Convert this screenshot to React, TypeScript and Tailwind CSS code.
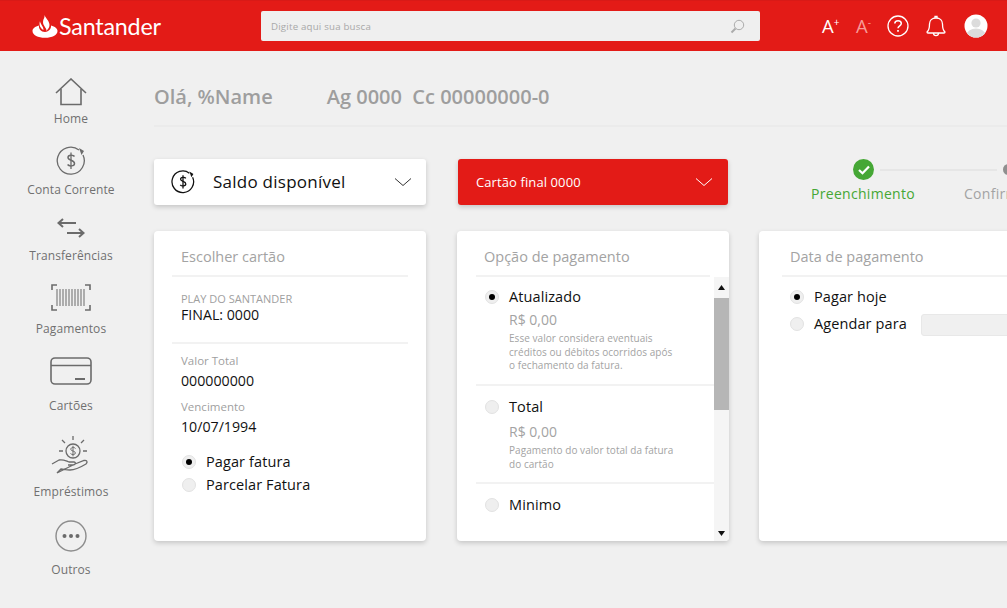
import React from "react";

const Radio = ({ on = false }: { on?: boolean }) => (
  <span className="flex h-[14px] w-[14px] shrink-0 items-center justify-center rounded-full border border-[#e2e2e2] bg-[#efefef]">
    {on && <span className="h-[6px] w-[6px] rounded-full bg-black" />}
  </span>
);

const Chevron = ({ color }: { color: string }) => (
  <svg width="18" height="10" viewBox="0 0 18 10" fill="none" stroke={color} strokeWidth="1">
    <path d="M1 1.5 L9 8.5 L17 1.5" />
  </svg>
);

const g = "#6b6b6b";

const icons = {
  home: (
    <svg width="32" height="28" viewBox="0 0 32 28" fill="none" stroke={g} strokeWidth="1.6">
      <path d="M1 15 L16 1 L31 15" />
      <path d="M6 11 V26.5 H26 V11" />
    </svg>
  ),
  conta: (
    <svg width="30" height="30" viewBox="0 0 30 30" fill="none" stroke={g} strokeWidth="1.3">
      <path d="M23 4 A13.5 13.5 0 1 0 27 9" />
      <path d="M23 2 L28 5 L25.5 9 Z" fill={g} stroke="none" />
      <path d="M18.5 10.5 C17.5 8.8 12 8.5 12 11.5 C12 15 18.5 13.5 18.5 17.5 C18.5 20.5 13 20.5 11.6 18.5" strokeWidth="1.5" />
      <path d="M15 6.5 V23" strokeWidth="1.3" />
    </svg>
  ),
  transf: (
    <svg width="28" height="20" viewBox="0 0 28 20" fill="none" stroke={g} strokeWidth="2">
      <path d="M1 5 H19" />
      <path d="M6 1 L1.5 5 L6 9" />
      <path d="M10 15 H27" />
      <path d="M22 11 L26.5 15 L22 19" />
    </svg>
  ),
  pag: (
    <svg width="40" height="27" viewBox="0 0 40 27" fill="none" stroke={g}>
      <path d="M1 6 V1 H6 M34 1 H39 V6 M1 21 V26 H6 M34 26 H39 V21" strokeWidth="1.6" />
      <path d="M6 5 V22 M9 5 V22 M12 5 V22 M15 5 V22 M18 5 V22 M21 5 V22 M24 5 V22 M27 5 V22 M30 5 V22 M33 5 V22" strokeWidth="1" />
    </svg>
  ),
  card: (
    <svg width="42" height="28" viewBox="0 0 42 28" fill="none" stroke={g}>
      <rect x="1" y="1" width="40" height="26" rx="4" strokeWidth="1.6" />
      <path d="M1 8.5 H41" strokeWidth="1.4" />
      <path d="M25 22 H35" strokeWidth="2" />
    </svg>
  ),
  emp: (
    <svg width="40" height="40" viewBox="0 0 40 40" fill="none" stroke={g} strokeWidth="1.3">
      <circle cx="22" cy="16" r="7" />
      <path d="M24.5 13.5 C23.5 12 19.8 12 19.8 14.3 C19.8 16.6 24.4 15.5 24.4 18 C24.4 20 20.6 20 19.5 18.5 M22 10.8 V21.3" strokeWidth="1" />
      <path d="M22 1 V5 M11 5 L14 8 M33 5 L30 8 M8 16 H12 M32 16 H36" />
      <path d="M1 29 L8 25 C12 24 15 26 18 27 H23 C25 27 25 30 22 30 H17 M24 29 L33 25.5 C36 25 37 27 35 29 C30 32 24 35 19 35 C15 35 12 34 10 34 L6 38 Z" />
    </svg>
  ),
  outros: (
    <svg width="32" height="32" viewBox="0 0 32 32">
      <circle cx="16" cy="16" r="15" fill="none" stroke="#8c8c8c" strokeWidth="1.4" />
      <circle cx="9.5" cy="16" r="2" fill={g} />
      <circle cx="16" cy="16" r="2" fill={g} />
      <circle cx="22.5" cy="16" r="2" fill={g} />
    </svg>
  ),
};

const NavItem = ({ icon, label, className, iconClass }: { icon: React.ReactNode; label: string; className: string; iconClass: string }) => (
  <div className={`flex flex-col items-center ${className}`}>
    <div className={`flex items-center justify-center ${iconClass}`}>{icon}</div>
    <span className="text-[12px] font-medium leading-4 tracking-[0.1px] text-[#707070]">{label}</span>
  </div>
);

const Card = ({ title, className, titleClass, children }: { title: string; className: string; titleClass: string; children: React.ReactNode }) => (
  <section className={`h-[310px] shrink-0 rounded-[4px] bg-white shadow-[0_2px_5px_rgba(0,0,0,0.18)] ${className}`}>
    <div className={`border-b-2 border-[#f2f2f2] pb-[8px] pl-[8px] pt-[16px] text-[14.5px] font-medium leading-[20px] text-[#a3a3a3] ${titleClass}`}>{title}</div>
    {children}
  </section>
);

const optionText = "ml-[10px] text-[14.5px] font-medium tracking-[0.1px] text-[#111]";

export default function App() {
  return (
    <div className="h-[608px] w-[1007px] overflow-hidden bg-[#f0f0f0] font-['Open_Sans',sans-serif]">
      <header className="flex h-[51px] items-center border-t border-[#d81a17] bg-[#e31b17]">
        <div className="flex w-[261px] items-center pl-[32px]">
          <svg width="26" height="23" viewBox="0 0 26 23" fill="white">
            <path d="M12.5 0 C13.5 3 17.5 6 17.5 10 C17.5 12.5 16 14 14.5 16 C15 13 11 11 11 7 C11 4 13 3 12.5 0 Z" />
            <path d="M8 6 C8 9 11.5 11 11.5 15 C9 13.5 6.5 11 8 6 Z" />
            <path d="M7 10.5 C3 11.5 0.5 13.5 0.5 16 C0.5 20 6 22.8 13 22.8 C20 22.8 25.5 20 25.5 16 C25.5 13.5 23 11.5 19 10.5 C19.5 13 17 17 13 17 C9 17 6.5 13.5 7 10.5 Z" />
          </svg>
          <span className="ml-[1px] font-['Lato',sans-serif] text-[23.3px] leading-[28px] tracking-[-0.2px] text-white">Santander</span>
        </div>
        <div className="flex h-[30px] w-[499px] items-center justify-between rounded-[2px] bg-[#efefef] pl-[10px] pr-[15px]">
          <span className="translate-y-[1px] text-[9.7px] tracking-[0.2px] text-[#a8a8a8]">Digite aqui sua busca</span>
          <svg width="15" height="15" viewBox="0 0 15 15" fill="none">
            <circle cx="9" cy="6" r="4.7" stroke="#ababab" strokeWidth="1" />
            <path d="M5.5 9.5 L1.5 13.5" stroke="#ababab" strokeWidth="2" />
          </svg>
        </div>
        <div className="ml-[62px] flex items-center">
          <span className="flex w-[19px] items-start text-[18.5px] leading-5 text-white">A<span className="text-[10px] leading-3">+</span></span>
          <span className="ml-[15px] flex w-[17px] items-start text-[18.5px] leading-5 text-[#f79a97]">A<span className="text-[10px] leading-3">-</span></span>
          <svg className="ml-[14px]" width="22" height="22" viewBox="0 0 22 22" fill="none" stroke="white" strokeWidth="1.3">
            <circle cx="11" cy="11" r="10" />
            <path d="M7.8 8.5 C7.8 4.8 14.3 4.8 14.3 8.5 C14.3 10.8 11 10.8 11 13.3" strokeWidth="1.5" />
            <path d="M11 15 V16.8" strokeWidth="1.7" />
          </svg>
          <svg className="ml-[17px]" width="20" height="22" viewBox="0 0 20 22" fill="none" stroke="white" strokeWidth="1.3">
            <path d="M1 17 C3.5 15 3.5 12 3.5 9 C3.5 5.5 6 3 10 3 C14 3 16.5 5.5 16.5 9 C16.5 12 16.5 15 19 17 C19 18 18.5 18 18 18 H2 C1.5 18 1 18 1 17 Z" />
            <path d="M9 3 V1.5 H11 V3 M7.5 18 C7.5 21.5 12.5 21.5 12.5 18" />
          </svg>
          <svg className="ml-[18px]" width="24" height="24" viewBox="0 0 24 24">
            <defs>
              <clipPath id="av"><circle cx="12" cy="12" r="11.5" /></clipPath>
            </defs>
            <circle cx="12" cy="12" r="11.5" fill="white" />
            <g clipPath="url(#av)" fill="#dcdcdc">
              <circle cx="12" cy="9" r="4.6" />
              <ellipse cx="12" cy="21" rx="9.5" ry="6.5" />
            </g>
          </svg>
        </div>
      </header>

      <div className="flex">
        <nav className="flex w-[142px] shrink-0 flex-col pt-[27px]">
          <NavItem icon={icons.home} label="Home" className="" iconClass="h-[28px] mb-[5px]" />
          <NavItem icon={icons.conta} label="Conta Corrente" className="mt-[19px]" iconClass="h-[30px] mb-[6px]" />
          <NavItem icon={icons.transf} label="Transferências" className="mt-[20px]" iconClass="h-[20px] mb-[10px]" />
          <NavItem icon={icons.pag} label="Pagamentos" className="mt-[20px]" iconClass="h-[27px] mb-[10px]" />
          <NavItem icon={icons.card} label="Cartões" className="mt-[20px]" iconClass="h-[27px] mb-[14px]" />
          <NavItem icon={icons.emp} label="Empréstimos" className="mt-[21px]" iconClass="h-[39px] mb-[10px]" />
          <NavItem icon={icons.outros} label="Outros" className="mt-[20px]" iconClass="h-[32px] mb-[10px]" />
        </nav>

        <main className="w-[900px] shrink-0 pl-[12px]">
          <div className="flex h-[76px] items-end border-b-2 border-[#ebebeb] pb-[13px]">
            <span className="text-[20px] font-semibold leading-[30px] text-[#9e9e9e]">Olá, %Name</span>
            <span className="ml-[54px] whitespace-pre text-[20px] font-semibold leading-[30px] text-[#9e9e9e]">Ag 0000  Cc 00000000-0</span>
          </div>

          <div className="mt-[32px] flex items-start">
            <div className="flex h-[46px] w-[272px] items-center rounded-[3px] bg-white pl-[17px] pr-[14px] shadow-[0_2px_5px_rgba(0,0,0,0.18)]">
              <svg width="24" height="24" viewBox="0 0 30 30" fill="none" stroke="#111" strokeWidth="1.6">
                <path d="M23 4 A13.5 13.5 0 1 0 27 9" />
                <path d="M23 2 L28 5 L25.5 9 Z" fill="#111" stroke="none" />
                <path d="M18.5 10.5 C17.5 8.8 12 8.5 12 11.5 C12 15 18.5 13.5 18.5 17.5 C18.5 20.5 13 20.5 11.6 18.5" />
                <path d="M15 6.5 V23" />
              </svg>
              <span className="ml-[18px] mb-[1px] flex-1 text-[17px] font-medium leading-6 tracking-[0.25px] text-[#111]">Saldo disponível</span>
              <Chevron color="#333" />
            </div>
            <div className="ml-[32px] flex h-[46px] w-[270px] items-center justify-between rounded-[3px] bg-[#e31b17] pl-[18px] pr-[15px] shadow-[0_2px_5px_rgba(0,0,0,0.18)]">
              <span className="text-[13px] font-medium leading-5 tracking-[0.1px] text-white">Cartão final 0000</span>
              <Chevron color="#fff" />
            </div>
            <div className="ml-[82px] flex w-[200px] flex-col">
              <div className="flex h-[21px] items-center">
                <span className="ml-[43px] flex h-[21px] w-[21px] shrink-0 items-center justify-center rounded-full bg-[#45a735]">
                  <svg width="12" height="10" viewBox="0 0 12 10" fill="none" stroke="white" strokeWidth="2.2"><path d="M1 5 L4.5 8.3 L11 1.5" /></svg>
                </span>
                <span className="ml-[6px] h-[2px] w-[117px] shrink-0 bg-[#e6e6e6]" />
                <span className="ml-[6px] h-[11px] w-[11px] shrink-0 rounded-full bg-[#8f8f8f]" />
              </div>
              <div className="mt-[4px] flex whitespace-nowrap pl-[1px] text-[14px] font-medium leading-[20px] tracking-[0.3px]">
                <span className="text-[#45a735]">Preenchimento</span>
                <span className="ml-[49px] text-[#a3a3a3]">Confirmação</span>
              </div>
            </div>
          </div>

          <div className="mt-[26px] flex items-start">
            <Card title="Escolher cartão" className="w-[272px]" titleClass="mx-[18px] pl-[9px]">
              <div className="mx-[18px] border-b-2 border-[#f2f2f2] pb-[19px] pl-[9px] pt-[14px]">
                <div className="text-[11px] leading-[15px] text-[#9f9f9f]">PLAY DO SANTANDER</div>
                <div className="text-[14.2px] font-medium leading-[17px] text-[#111]">FINAL: 0000</div>
              </div>
              <div className="ml-[27px] pt-[9px]">
                <div className="text-[11.5px] leading-[15px] text-[#9f9f9f]">Valor Total</div>
                <div className="mt-[4px] text-[14.2px] font-medium leading-[18px] text-[#111]">000000000</div>
                <div className="mt-[9px] text-[11.5px] leading-[15px] text-[#9f9f9f]">Vencimento</div>
                <div className="mt-[4px] text-[14.2px] font-medium leading-[18px] text-[#111]">10/07/1994</div>
                <div className="ml-[1px] mt-[18px] flex h-[16px] items-center">
                  <Radio on />
                  <span className={optionText}>Pagar fatura</span>
                </div>
                <div className="ml-[1px] mt-[7px] flex h-[16px] items-center">
                  <Radio />
                  <span className={optionText}>Parcelar Fatura</span>
                </div>
              </div>
            </Card>

            <Card title="Opção de pagamento" className="ml-[31px] w-[272px] overflow-hidden" titleClass="mx-[19px]">
              <div className="flex h-[265px]">
                <div className="ml-[19px] flex-1 overflow-hidden">
                  <div className="h-[109px] border-b-2 border-[#f2f2f2] pl-[9px] pt-[11px]">
                    <div className="flex h-[18px] items-center">
                      <Radio on />
                      <span className={optionText}>Atualizado</span>
                    </div>
                    <div className="ml-[24px] mt-[4px] text-[14px] leading-[20px] text-[#a3a3a3]">R$ 0,00</div>
                    <p className="ml-[24px] mt-[2px] w-[172px] text-[10px] leading-[13.5px] tracking-[0.05px] text-[#a3a3a3]">Esse valor considera eventuais créditos ou débitos ocorridos após o fechamento da fatura.</p>
                  </div>
                  <div className="h-[98px] border-b-2 border-[#f2f2f2] pl-[9px] pt-[12px]">
                    <div className="flex h-[18px] items-center">
                      <Radio />
                      <span className={optionText}>Total</span>
                    </div>
                    <div className="ml-[24px] mt-[6px] text-[14px] leading-[20px] text-[#a3a3a3]">R$ 0,00</div>
                    <p className="ml-[24px] mt-[2px] w-[172px] text-[10px] leading-[13.5px] tracking-[0.05px] text-[#a3a3a3]">Pagamento do valor total da fatura do cartão</p>
                  </div>
                  <div className="pl-[9px] pt-[12px]">
                    <div className="flex h-[18px] items-center">
                      <Radio />
                      <span className={optionText}>Minimo</span>
                    </div>
                  </div>
                </div>
                <div className="flex w-[15px] shrink-0 flex-col bg-[#f5f5f5]">
                  <div className="flex h-[21px] items-center justify-center">
                    <svg width="7" height="5" viewBox="0 0 7 5"><path d="M3.5 0 L7 5 H0 Z" fill="#111" /></svg>
                  </div>
                  <div className="h-[112px] bg-[#b6b6b6]" />
                  <div className="flex flex-1 items-end justify-center pb-[6px]">
                    <svg width="7" height="5" viewBox="0 0 7 5"><path d="M0 0 H7 L3.5 5 Z" fill="#111" /></svg>
                  </div>
                </div>
              </div>
            </Card>

            <Card title="Data de pagamento" className="ml-[30px] w-[300px]" titleClass="ml-[23px]">
              <div className="ml-[31px] pt-[11px]">
                <div className="flex h-[18px] items-center">
                  <Radio on />
                  <span className={optionText}>Pagar hoje</span>
                </div>
                <div className="mt-[9px] flex h-[18px] items-center">
                  <Radio />
                  <span className={optionText}>Agendar para</span>
                  <span className="ml-[14px] mt-[2px] h-[22px] w-[120px] shrink-0 rounded-[3px] border border-[#e8e8e8] bg-[#f0f0f0]" />
                </div>
              </div>
            </Card>
          </div>
        </main>
      </div>
    </div>
  );
}
